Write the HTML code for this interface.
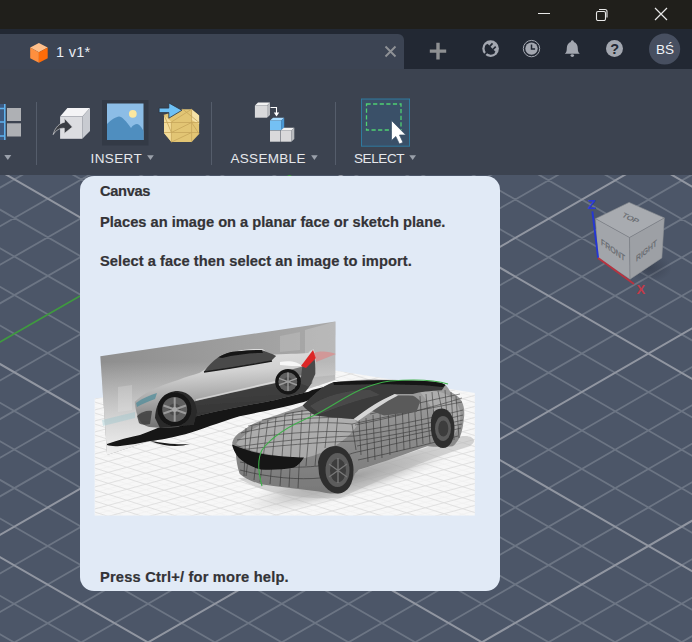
<!DOCTYPE html>
<html><head><meta charset="utf-8">
<style>
*{margin:0;padding:0;box-sizing:border-box}
html,body{width:692px;height:642px;overflow:hidden;background:#4c5668;font-family:"Liberation Sans",sans-serif}
.abs{position:absolute}
#title{position:absolute;left:0;top:0;width:692px;height:29px;background:#201f1b}
#tabs{position:absolute;left:0;top:29px;width:692px;height:39.5px;background:#222833}
#tab{position:absolute;left:-10px;top:33.8px;width:414px;height:37px;background:#3c4453;border-radius:0 6px 0 0}
#toolbar{position:absolute;left:0;top:68.5px;width:692px;height:106.5px;background:#3c4350}
#viewport{position:absolute;left:0;top:175px;width:692px;height:467px;background:#4c5668;overflow:hidden}
.grid{position:absolute;left:0;top:0}
#tip{position:absolute;left:80px;top:176px;width:420px;height:415px;background:#e1eaf6;border-radius:14px;overflow:hidden}
.tt{position:absolute;left:20px;font-weight:bold;font-size:14.67px;color:#333336;-webkit-text-stroke:0.2px #333336;white-space:nowrap;line-height:1}
.lbl{position:absolute;top:151.8px;font-size:13.5px;color:#e6e8ec;white-space:nowrap;line-height:1}
.sep{position:absolute;top:102px;width:1px;height:63px;background:#545c6a}
.dd{position:absolute;top:155px;width:0;height:0;border-left:3.5px solid transparent;border-right:3.5px solid transparent;border-top:5px solid #9aa0aa}
</style></head><body>
<div id="title">
 <div class="abs" style="left:538px;top:13px;width:12px;height:1px;background:#e8e8e8"></div>
 <svg class="abs" style="left:594px;top:7px" width="16" height="14" viewBox="0 0 16 14"><rect x="2.5" y="4.5" width="9" height="9" rx="1.5" fill="none" stroke="#e8e8e8" stroke-width="1.1"/><path d="M5 2.5h6a2 2 0 0 1 2 2v6" fill="none" stroke="#e8e8e8" stroke-width="1.1"/></svg>
 <svg class="abs" style="left:654px;top:7px" width="14" height="14" viewBox="0 0 14 14"><path d="M1 1L13 13M13 1L1 13" stroke="#e8e8e8" stroke-width="1.2"/></svg>
</div>
<div id="tabs"></div>
<div id="tab"></div>
<svg class="abs" style="left:0;top:29px" width="692" height="39" viewBox="0 29 692 39">
 <polygon points="38.9,43.1 47.7,47.6 38.9,52.2 30.2,47.6" fill="#ffc08c"/>
 <polygon points="30.2,47.6 38.9,52.2 38.9,62.8 30.2,58.2" fill="#ff8f3e"/>
 <polygon points="38.9,52.2 47.7,47.6 47.7,58.2 38.9,62.8" fill="#ff6c08"/>
 <path d="M385.5 46.5L395.5 56.5M395.5 46.5L385.5 56.5" stroke="#8f9296" stroke-width="1.9"/>
 <path d="M438 42.8v16.6M429.8 51.1h16.4" stroke="#8e9092" stroke-width="3.4"/>
 <g fill="#a3a7b0">
  <circle cx="490.6" cy="48.6" r="8.3"/>
  <circle cx="531.5" cy="48.6" r="8.2" fill="none" stroke="#a3a7b0" stroke-width="1"/>
  <circle cx="531.5" cy="48.6" r="6.2"/>
  <path d="M564.8 53.8c1.6-1.3 2-3 2-5.5c0-3.3 1.6-5.6 4-6.3c0-1 .5-1.8 1.5-1.8s1.5.8 1.5 1.8c2.4.7 4 3 4 6.3c0 2.5.4 4.2 2 5.5z"/>
  <ellipse cx="572.3" cy="55.6" rx="1.8" ry="1.3"/>
  <circle cx="614.5" cy="48.4" r="8.5"/>
 </g>
 <path d="M495.05 53.05A6.3 6.3 0 0 1 486.15 44.15Z" fill="#222833"/>
 <polygon points="485.93,45.35 487.56,43.72 495.48,51.64 493.85,53.27" fill="#222833"/><polygon points="489.12,45.70 491.94,42.87 493.15,44.07 490.32,46.90" fill="#222833"/><polygon points="492.30,48.88 495.13,46.05 496.33,47.26 493.50,50.08" fill="#222833"/>
 <polygon points="487.14,50.79 483.25,54.68 484.52,55.95 488.41,52.06" fill="#222833"/>
 <path d="M531.5 44.5v4.6h3.6" stroke="#222833" stroke-width="1.5" fill="none"/>
 <text x="614.6" y="54" text-anchor="middle" font-family="Liberation Sans" font-weight="bold" font-size="14.5" fill="#222833">?</text>
 <circle cx="664.6" cy="49" r="15.6" fill="#474f60"/>
 <text x="664.9" y="54.2" text-anchor="middle" font-family="Liberation Sans" font-size="13.5" fill="#f2f4f8">BŚ</text>
</svg>
<div class="abs" style="left:56px;top:44px;font-size:14.5px;color:#e9edf3;line-height:16px;white-space:nowrap;letter-spacing:0.3px">1 v1*</div>
<div id="toolbar"></div>
<svg class="abs" style="left:0;top:68px" width="692" height="107" viewBox="0 68 692 107">
 <!-- left partial icon -->
 <rect x="0" y="104" width="4.5" height="36" fill="#3e5a80"/>
 <path d="M4.8 104v36M0 108.5h5M0 122h5M0 136h5" stroke="#5fb2ee" stroke-width="1.6"/>
 <rect x="7" y="108" width="14" height="13" fill="#aeb0b4"/>
 <rect x="7" y="123.3" width="14" height="13.2" fill="#aeb0b4"/>
 <polygon points="4.3,155 11.3,155 7.8,160" fill="#9aa0aa"/>
 <rect x="36" y="102" width="1" height="63" fill="#555d6b"/>
 <!-- insert cube -->
 <polygon points="60.1,116.6 67.4,107.9 90,107.9 82.3,116.6" fill="#f4f4f6"/>
 <polygon points="60.1,116.6 82.3,116.6 82.3,138.8 60.1,138.8" fill="#dcdde1"/>
 <polygon points="82.3,116.6 90,107.9 90,131.1 82.3,138.8" fill="#c8cbd1"/>
 <path d="M53.2 134.6C55 127 60 123 64.5 122.3L64.3 118.3L72.4 127L64.3 133.4L64.3 128.3C60 127.8 56 130 53.2 134.6Z" fill="#3a3d43" stroke="#e8e8ea" stroke-width="0.6"/>
 <!-- image icon -->
 <rect x="102" y="100" width="46.5" height="45.5" fill="#333a46"/>
 <rect x="107" y="103.5" width="36.5" height="36.5" fill="#8cbde6"/>
 <path d="M107 140V124C112 119 116 117 119 116.5C122 116.5 126 121 131 128C133 125 135 124 137 124C139.5 124 142 128 143.5 131V140Z" fill="#4f8ebf"/>
 <circle cx="132.8" cy="113.8" r="3.9" fill="#fbe7a0"/>
 <!-- mesh icon -->
 <polygon points="164,114.8 164,133.1 171.4,142.1 191.6,142.1 199.1,133.9 199.1,115.6 191.6,109.2 182.7,109.2" fill="#e2c574"/>
 <polygon points="164,114.8 171.4,122 171.4,142.1 164,133.1" fill="#f3dc9a"/>
 <polygon points="191.6,109.2 199.1,115.6 199.1,124 191.6,120" fill="#f5e2a8"/>
 <path d="M171.4 122V142.1M191.6 109.2V142.1M164 122.5L199 122.5M164 132.5L199 132.5M171.4 122L191.6 109.2M164 114.8L171.4 132.5M171.4 132.5L191.6 122.5M171.4 142.1L191.6 132.5M191.6 122.5L199.1 133.9M182.7 109.2L199.1 122.5" stroke="#c7a65a" stroke-width="0.8" fill="none"/>
 <path d="M159.1 108.1H168.8V102.9L181.9 110.3L168.8 118.2V112.6H159.1Z" fill="#6ec1f6" stroke="#2c3340" stroke-width="0.8"/>
 <rect x="211" y="102" width="1" height="63" fill="#555d6b"/>
 <!-- assemble icon -->
 <polygon points="254.9,105.5 258,102.5 270,102.5 267,105.5" fill="#f2f2f2"/>
 <rect x="254.9" y="105.5" width="12.1" height="12.2" fill="#d9d9db"/>
 <polygon points="267,105.5 270,102.5 270,115 267,117.7" fill="#b9bbbf"/>
 <path d="M270.5 107.5H276.5V114" stroke="#ffffff" stroke-width="1.1" fill="none"/>
 <polygon points="273.8,112.5 279.2,112.5 276.5,116.5" fill="#ffffff"/>
 <polygon points="270,120.5 273,117.7 284.2,117.7 281.2,120.5" fill="#a9dcff"/>
 <rect x="270" y="120.5" width="11.2" height="9.7" fill="#74c0f4"/>
 <polygon points="281.2,120.5 284.2,117.7 284.2,127.5 281.2,130.2" fill="#4a98d4"/>
 <rect x="270" y="130.5" width="10.4" height="11.2" fill="#d9d9db"/>
 <polygon points="280.8,130.5 283.8,127.8 294.3,127.8 291.3,130.5" fill="#f2f2f2"/>
 <rect x="280.8" y="130.5" width="10.5" height="11.2" fill="#d9d9db"/>
 <polygon points="291.3,130.5 294.3,127.8 294.3,139 291.3,141.7" fill="#b9bbbf"/>
 <rect x="335" y="102" width="1" height="63" fill="#555d6b"/>
 <!-- select -->
 <rect x="361.5" y="99" width="48" height="47.2" fill="#3a5068" stroke="#2f7a9e" stroke-width="1"/>
 <rect x="366.5" y="104" width="34.5" height="26" fill="none" stroke="#4fd072" stroke-width="1.3" stroke-dasharray="4.2 2.4"/>
 <path d="M391.5 120.5V140.5L395.8 136.5L399.4 144L403 142.4L399.5 135H405.8Z" fill="#ffffff" stroke="#3a5068" stroke-width="0.7"/>
</svg>
<div class="lbl" style="left:90.5px;letter-spacing:0.4px">INSERT</div>
<div class="lbl" style="left:230.5px;letter-spacing:0.3px">ASSEMBLE</div>
<div class="lbl" style="left:354px;letter-spacing:-0.4px">SELECT</div>
<svg class="abs" style="left:0;top:150px" width="692" height="14" viewBox="0 150 692 14">
 <polygon points="147.1,155.2 153.8,155.2 150.45,160" fill="#9aa0aa"/>
 <polygon points="311.1,155.2 317.7,155.2 314.4,160" fill="#9aa0aa"/>
 <polygon points="409.3,155.2 416,155.2 412.65,160" fill="#9aa0aa"/>
</svg>
<div id="viewport"><svg class="grid" width="692" height="467" viewBox="0 175 692 467">
<path d="M580.2 160.2L711.6 236.4M513.6 160.1L711.6 274.8M448.6 160.9L711.6 313.3M381.9 160.8L711.6 351.7M248.4 160.5L711.6 428.6M47.9 160.2L-19.1 198.6M181.6 160.4L711.6 467.1M114.8 160.3L-19.1 237.2M114.8 160.3L711.6 505.6M181.6 160.4L-19.1 275.8M47.9 160.2L711.6 544.0M248.4 160.5L-19.1 314.4M-19.1 198.6L711.6 621.0M381.9 160.8L-19.2 391.6M-19.1 237.2L711.6 659.4M448.6 160.9L-19.2 430.2M-19.1 275.8L645.1 659.5M516.9 160.1L-19.2 468.8M-19.1 314.4L578.5 659.5M583.5 160.2L-19.2 507.4M-19.2 391.6L445.2 659.6M711.6 163.3L-19.2 584.6M-19.2 430.2L378.5 659.6M711.6 201.8L-19.3 623.2M-19.2 468.8L311.8 659.7M711.6 240.2L-15.9 659.9M-19.2 507.4L245.0 659.7M711.6 278.7L51.0 659.8M-19.2 584.6L111.3 659.8M711.6 355.6L184.8 659.8M-19.3 623.2L44.3 659.8M711.6 394.0L251.7 659.7M711.6 432.5L318.4 659.7M711.6 471.0L385.2 659.6M711.6 547.9L518.5 659.6M711.6 586.4L585.1 659.5M711.6 624.8L651.7 659.5" stroke="#6c7584" stroke-width="1.8" fill="none"/>
<path d="M646.7 160.3L711.6 197.9M315.2 160.7L711.6 390.2M-19.1 160.0L711.6 582.5M-19.1 353.0L511.9 659.6M650.1 160.3L-19.2 546.0M-19.2 546.0L178.1 659.8M711.6 317.1L117.9 659.8M711.6 509.4L451.9 659.6" stroke="#9196a1" stroke-width="2.0" fill="none"/>
<path d="M315.2 160.7L-19.1 353.0" stroke="#3f9a3f" stroke-width="1.6" fill="none"/>
</svg></div>
<svg class="abs" style="left:575px;top:190px" width="100" height="115" viewBox="575 190 100 115">
<defs>
 <radialGradient id="cs" cx="0.5" cy="0.5" r="0.5"><stop offset="0" stop-color="#2e3442" stop-opacity="0.5"/><stop offset="1" stop-color="#2e3442" stop-opacity="0"/></radialGradient>
</defs>
<ellipse cx="650" cy="268" rx="22" ry="14" fill="url(#cs)"/>
<polygon points="629.1,202.4 664.3,217.9 629.5,237.5 595.6,218.7" fill="#a8abb0"/>
<polygon points="595.6,218.7 629.5,237.5 630,279.2 598.1,257.9" fill="#a2a5aa"/>
<polygon points="629.5,237.5 664.3,217.9 661.8,257.9 630,279.2" fill="#9da0a5"/>
<path d="M595.6 218.7L629.5 237.5L664.3 217.9M629.5 237.5L630 279.2" stroke="#7d8085" stroke-width="0.7" fill="none"/>
<path d="M629.1 202.4L664.3 217.9L661.8 257.9L630 279.2L598.1 257.9L595.6 218.7Z" stroke="#8f9296" stroke-width="0.6" fill="none"/>
<g font-family="Liberation Sans" font-size="9" fill="#66696e" stroke="#66696e" stroke-width="0.25">
 <text transform="matrix(0.85 0.42 -0.5 0.6 629 220)" text-anchor="middle">TOP</text>
 <text transform="matrix(0.78 0.55 0 0.95 613 253)" text-anchor="middle">FRONT</text>
 <text transform="matrix(0.75 -0.6 0 0.95 646.5 253.5)" text-anchor="middle">RIGHT</text>
</g>
<path d="M598.1 257.9L592.4 211.3" stroke="#2436d6" stroke-width="1.9"/>
<path d="M598.1 257.9L634 284.1" stroke="#b8323f" stroke-width="1.9"/>
<text x="587.8" y="209" font-family="Liberation Sans" font-weight="bold" font-size="13.5" fill="#2a3ad8">Z</text>
<text x="636.4" y="294" font-family="Liberation Sans" font-weight="bold" font-size="13" fill="#c23a48">X</text>
</svg>

<div id="tip">
 <div class="tt" style="top:8.3px;letter-spacing:-0.35px">Canvas</div>
 <div class="tt" style="top:38.5px">Places an image on a planar face or sketch plane.</div>
 <div class="tt" style="top:78.3px;letter-spacing:0.07px">Select a face then select an image to import.</div>
  <div class="tt" style="top:393.5px;letter-spacing:0.19px">Press Ctrl+/ for more help.</div>
</div>
<svg class="abs" style="left:90px;top:315px" width="390" height="205" viewBox="90 315 390 205">
<defs>
 <linearGradient id="pg" x1="0" y1="0" x2="1" y2="0">
  <stop offset="0" stop-color="#8e8e8e"/><stop offset="0.5" stop-color="#9c9c9c"/><stop offset="1" stop-color="#aaaaaa"/>
 </linearGradient>
 <linearGradient id="pfade" x1="0" y1="0" x2="0" y2="1">
  <stop offset="0" stop-color="#ffffff" stop-opacity="0"/><stop offset="0.3" stop-color="#ffffff" stop-opacity="0"/><stop offset="0.75" stop-color="#e8e8e8" stop-opacity="0.8"/><stop offset="1" stop-color="#f2f2f2" stop-opacity="1"/>
 </linearGradient>
 <linearGradient id="body1" x1="0" y1="0" x2="0.15" y2="1">
  <stop offset="0" stop-color="#e2e2e2"/><stop offset="0.35" stop-color="#d2d2d2"/><stop offset="0.65" stop-color="#a8a8a8"/><stop offset="1" stop-color="#707070"/>
 </linearGradient>
 <linearGradient id="body2" x1="0" y1="0" x2="0" y2="1">
  <stop offset="0" stop-color="#a0a0a0"/><stop offset="0.5" stop-color="#8c8c8c"/><stop offset="1" stop-color="#787878"/>
 </linearGradient>
 <radialGradient id="shad" cx="0.5" cy="0.5" r="0.5">
  <stop offset="0" stop-color="#8a8a8a" stop-opacity="0.75"/><stop offset="0.6" stop-color="#b0b0b0" stop-opacity="0.5"/><stop offset="1" stop-color="#d8d8d8" stop-opacity="0"/>
 </radialGradient>
 <pattern id="fgrid" width="18.6" height="18.6" patternUnits="userSpaceOnUse" patternTransform="matrix(1 -0.27 1 0.32 0 0)">
  <path d="M0 9.3H18.6M9.3 0V18.6" stroke="#ececec" stroke-width="0.5" fill="none"/>
  <path d="M0 0H18.6M0 0V18.6" stroke="#cdcdcd" stroke-width="0.9" fill="none"/>
 </pattern>
<filter id="soft" x="-5%" y="-5%" width="110%" height="110%"><feGaussianBlur stdDeviation="0.45"/></filter>
</defs>
<g filter="url(#soft)">
<!-- floor -->
<polygon points="94.7,398.5 335,370.5 474.8,393.1 474.8,515.5 94.7,515.5" fill="#f7f7f7"/>
<clipPath id="fclip"><polygon points="94.7,398.5 335,370.5 474.8,393.1 474.8,515.5 94.7,515.5"/></clipPath>
<g clip-path="url(#fclip)"><path d="M94.7 360.5L474.8 257.9M94.7 371.5L474.8 268.9M94.7 382.5L474.8 279.9M94.7 393.5L474.8 290.9M94.7 404.5L474.8 301.9M94.7 415.5L474.8 312.9M94.7 426.5L474.8 323.9M94.7 437.5L474.8 334.9M94.7 448.5L474.8 345.9M94.7 459.5L474.8 356.9M94.7 470.5L474.8 367.9M94.7 481.5L474.8 378.9M94.7 492.5L474.8 389.9M94.7 503.5L474.8 400.9M94.7 514.5L474.8 411.9M94.7 525.5L474.8 422.9M94.7 536.5L474.8 433.9M94.7 547.5L474.8 444.9M94.7 558.5L474.8 455.9M94.7 569.5L474.8 466.9M94.7 580.5L474.8 477.9M94.7 591.5L474.8 488.9M94.7 602.5L474.8 499.9M94.7 613.5L474.8 510.9M94.7 242.5L474.8 364.1M94.7 253.5L474.8 375.1M94.7 264.5L474.8 386.1M94.7 275.5L474.8 397.1M94.7 286.5L474.8 408.1M94.7 297.5L474.8 419.1M94.7 308.5L474.8 430.1M94.7 319.5L474.8 441.1M94.7 330.5L474.8 452.1M94.7 341.5L474.8 463.1M94.7 352.5L474.8 474.1M94.7 363.5L474.8 485.1M94.7 374.5L474.8 496.1M94.7 385.5L474.8 507.1M94.7 396.5L474.8 518.1M94.7 407.5L474.8 529.1M94.7 418.5L474.8 540.1M94.7 429.5L474.8 551.1M94.7 440.5L474.8 562.1M94.7 451.5L474.8 573.1M94.7 462.5L474.8 584.1M94.7 473.5L474.8 595.1M94.7 484.5L474.8 606.1M94.7 495.5L474.8 617.1M94.7 506.5L474.8 628.1M94.7 517.5L474.8 639.1" stroke="#efefef" stroke-width="0.6" fill="none"/><path d="M94.7 366.0L474.8 263.4M94.7 377.0L474.8 274.4M94.7 388.0L474.8 285.4M94.7 399.0L474.8 296.4M94.7 410.0L474.8 307.4M94.7 421.0L474.8 318.4M94.7 432.0L474.8 329.4M94.7 443.0L474.8 340.4M94.7 454.0L474.8 351.4M94.7 465.0L474.8 362.4M94.7 476.0L474.8 373.4M94.7 487.0L474.8 384.4M94.7 498.0L474.8 395.4M94.7 509.0L474.8 406.4M94.7 520.0L474.8 417.4M94.7 531.0L474.8 428.4M94.7 542.0L474.8 439.4M94.7 553.0L474.8 450.4M94.7 564.0L474.8 461.4M94.7 575.0L474.8 472.4M94.7 586.0L474.8 483.4M94.7 597.0L474.8 494.4M94.7 608.0L474.8 505.4M94.7 619.0L474.8 516.4M94.7 248.0L474.8 369.6M94.7 259.0L474.8 380.6M94.7 270.0L474.8 391.6M94.7 281.0L474.8 402.6M94.7 292.0L474.8 413.6M94.7 303.0L474.8 424.6M94.7 314.0L474.8 435.6M94.7 325.0L474.8 446.6M94.7 336.0L474.8 457.6M94.7 347.0L474.8 468.6M94.7 358.0L474.8 479.6M94.7 369.0L474.8 490.6M94.7 380.0L474.8 501.6M94.7 391.0L474.8 512.6M94.7 402.0L474.8 523.6M94.7 413.0L474.8 534.6M94.7 424.0L474.8 545.6M94.7 435.0L474.8 556.6M94.7 446.0L474.8 567.6M94.7 457.0L474.8 578.6M94.7 468.0L474.8 589.6M94.7 479.0L474.8 600.6M94.7 490.0L474.8 611.6M94.7 501.0L474.8 622.6M94.7 512.0L474.8 633.6" stroke="#dedede" stroke-width="0.9" fill="none"/></g>
<!-- panel -->
<polygon points="100.3,356.3 335.4,321.6 335.2,380 107.1,455" fill="url(#pg)"/>
<polygon points="305,330 335.4,321.6 335.2,375 305,378" fill="#c4c4c4" opacity="0.55"/>
<polygon points="280,336 300,332 300,350 280,352" fill="#bdbdbd" opacity="0.5"/>
<polygon points="118,387 132,385 132,410 118,412" fill="#b4b4b4" opacity="0.6"/>
<polygon points="100.3,356.3 335.4,321.6 335.2,380 107.1,455" fill="url(#pfade)"/>
<!-- sketch car under shadow -->
<path d="M107 444C118 440 130 437 140 435C160 428 175 420 190 414C215 408 240 402 258 399C280 396 295 394 308 392L312 390L320 388C326 386 331 385 335 384L335 391C325 394 315 398 304.5 401.7C285 407 260 412 239.5 416.2C220 422 200 430 185.3 434.2C170 438 160 440 150 441C140 443 130 445 120 446C114 446.5 110 446 107 445Z" fill="#121212"/>
<path d="M150 441C165 443 175 445 190 444C180 447 165 447 150 441Z" fill="#1a1a1a"/>
<!-- sketch car body -->
<path d="M134.7 401.7C142 395 150 390 158.2 387.3C165 384 172 382 178.1 380C186 377 193 375 199.8 372.8C206 369 210 365 214.2 362C218 359 221 357 225 354.7C235 351 243 350 250.3 349.3C255 349 260 349 263 349.3C265 351 267 353 268.4 354.7C285 354 300 353.5 308.2 352.9C310 351 312 350 313.6 349.3C315 353 316 358 315.4 362C314.5 370 313 378 311.8 383.6C309 387 307 390 304.5 392.7C295 395 285 397 275.6 399.9C250 405 220 410 196.2 416.2C190 420 184 424 178.1 427C168 428 158 428 149.2 427C146 426 144 425 142 423.4C139 420 137.5 416 136.5 412.5C135.5 408 135 405 134.7 401.7Z" fill="url(#body1)"/>
<!-- side dark lower -->
<path d="M192 402C225 394 270 384 310 376L311 384C309 387 307 390 304.5 392.7C295 395 285 397 275.6 399.9C250 405 220 410 196.2 416.2C192 418 190 419 188 420Z" fill="#222222" opacity="0.8"/>
<path d="M285 372C295 368 305 366 314 364L312 384C305 380 295 378 285 380Z" fill="#3a3a3a" opacity="0.6"/>
<path d="M196 400C230 392 270 383 306 375" stroke="#ffffff" stroke-width="1.5" fill="none" opacity="0.45"/>
<!-- windows -->
<path d="M203.8 371.8C208 366 213 361 218.3 357.3C224 354 230 352 235.6 351.6C245 350.5 253 350 261.6 350.1C267 352 272 354 276.1 355.9C274 358 272 360 270.3 361.7C258 363 246 365 235.6 367.5C224 369 213 371 203.8 371.8Z" fill="#4a4a4a"/>
<path d="M218.3 357.3C224 354 230 352 235.6 351.6C245 350.5 253 350 261.6 350.1L263 353C250 353 235 355 222 358Z" fill="#161616"/>
<path d="M204 372C225 369 250 365 272 361" stroke="#1e1e1e" stroke-width="1.4" fill="none"/>
<path d="M302.5 364.7L314.1 353.1C315 360 315.5 367 315.3 373.9C313 379 311 383 308.3 386.6L300.2 383.2Z" fill="#4a4a4a"/>
<path d="M280 362C290 360 298 362 302 366C296 366 288 366 280 365Z" fill="#ffffff" opacity="0.8"/>
<path d="M301 366L313 350L316 358L306 368Z" fill="#dc2828"/>
<path d="M314 353C322 350 330 352 336 354L316 362Z" fill="#f07070" opacity="0.45"/>
<path d="M136 403C143 398 150 395 157 393L155 399C149 401 142 404 137 407Z" fill="#4a8a98" opacity="0.7"/>
<path d="M137 416C141 412 147 410 152 411L150 424C145 425 141 425 139 423Z" fill="#3a3a3a" opacity="0.8"/>
<path d="M102 420L135 412L135 418L103 426Z" fill="#8ec4cc" opacity="0.35"/>
<!-- sketch wheels -->
<path d="M155 418C156 400 165 391 178 391C190 392 196 400 197 412L194 425L160 428Z" fill="#2a2a2a"/>
<circle cx="174.5" cy="409.3" r="16.8" fill="#141414"/>
<circle cx="174.7" cy="409.4" r="12.5" fill="#5e5e5e"/>
<circle cx="174.7" cy="409.4" r="6" fill="#484848"/>
<path d="M174.7 397.5V421.5M163.5 405.5L186 413.5M163.5 413.5L186 405.5" stroke="#9a9a9a" stroke-width="2"/>
<circle cx="174.7" cy="409.4" r="2.5" fill="#a8a8a8"/>
<circle cx="288" cy="381.7" r="12.8" fill="#121212"/>
<circle cx="287.8" cy="381.8" r="9.5" fill="#5e5e5e"/>
<circle cx="287.8" cy="381.8" r="4.5" fill="#484848"/>
<path d="M288 372.5V391M279 378.4L297 385M279 385L297 378.4" stroke="#9c9c9c" stroke-width="1.4"/>
<!-- 3D car shadow -->
<path d="M238 478C260 492 300 500 340 498C380 480 420 462 470 446C480 440 470 432 455 438C420 450 380 462 350 474Z" fill="#b4b4b4" opacity="0.55"/>
<ellipse cx="350" cy="478" rx="115" ry="20" fill="url(#shad)" transform="rotate(-16 350 478)"/>
<!-- 3D car body -->
<path d="M232.2 442.7C234 437 237 434 241.3 431.8C250 425 256 422 264.7 419.2C280 414 292 410 302.7 405.5C315 395 322 386 333.4 382.3C350 380 365 379.5 376.7 379.5C400 380 415 380 427.3 381.3C437 382 442 383 445.4 384.9C448 387 449 390 450.8 392.1C456 395 459 397 461.6 401.1C464 406 464.5 410 464.2 415.6C463.5 425 462 432 459.8 437.3C457 442 455 445 452.6 446.3C445 447 435 447 427.3 446.3C410 452 385 462 358.7 469.8C357 472 356 473 355 473.4C352 482 347 490 340.6 493.2C332 494 325 493 318.9 491.4C300 489 280 487 261.1 484.2C250 481 243 477 239.5 473.4C237 466 236 458 235.8 451.7C234 448 232.5 446 232.2 442.7Z" fill="url(#body2)"/>
<!-- hood highlight -->
<path d="M236 444C245 432 262 422 290 414C310 409 330 410 345 414C352 417 356 420 358 424C350 438 330 452 305 458C275 457 250 452 236 444Z" fill="#c6c6c6" opacity="0.55"/>
<path d="M420 392C440 388 455 395 460 410C462 420 458 432 450 440C445 430 435 410 420 392Z" fill="#c0c0c0" opacity="0.5"/>
<!-- mesh lines -->
<g stroke="#1a1a1a" stroke-width="0.65" fill="none" opacity="0.7">
 <path d="M241 433C270 426 310 420 352 424C380 418 420 410 462 402"/>
 <path d="M237 440C275 434 315 430 354 432C385 427 425 420 463 410"/>
 <path d="M238 450C275 446 320 442 356 441C390 436 430 428 463 420"/>
 <path d="M236 447C270 442 315 437 355 436C390 431 428 424 463 415"/>
 <path d="M248 426C280 420 320 416 350 418M262 420C290 414 320 412 345 414M285 414C305 410 325 408 340 410"/>
 <path d="M240 462C270 468 300 468 318 466C335 460 345 455 357 452C395 444 430 436 461 428"/>
 <path d="M240 470C270 478 300 480 320 478M358 460C395 452 430 444 458 436M357 446C395 438 430 431 462 424"/>
 <path d="M355 425C390 418 430 408 462 398M370 414C400 408 430 400 460 394"/>
 <path d="M246 428L244 476M252 426L246 476M260 422L254 480M268 420L260 482M276 417L270 484M285 414L280 486M293 412L289 487M302 410L298 488M311 410L306 466M320 410L315 466M329 412L325 448M338 414L335 446M352 424L356 450M359 420L361 455M366 418L368 462M373 415L375 460M380 412L382 458M388 408L390 455M395 405L397 452M402 402L404 450M408 400L410 448M414 398L417 446M420 396L423 444M426 394L430 443M432 392L436 442M438 391L442 410M445 390L449 444M451 392L454 440M456 396L459 438"/>
</g>
<!-- greenhouse glass -->
<path d="M302.7 405.5C312 396 322 386 333.4 382.3C360 380 400 380 427.3 381.3C437 382 442 383 445.4 384.9L441.8 390.3C430 391 420 392 412.9 393.9C405 394 399 394 394.8 393.9C380 402 365 412 355.1 419.2C340 418 325 417 315.3 415.6C310 412 305 409 302.7 405.5Z" fill="#3a3a3a"/>
<path d="M333.4 382.3C360 380 400 379.5 427.3 381.3C437 382 442 383 445.4 384.9L443 387C420 384 380 383.5 334 385Z" fill="#141414"/>
<path d="M310 406C325 396 345 390 370 390L380 395C355 400 335 408 320 414Z" fill="#555555" opacity="0.6"/>
<path d="M369.5 410.2C378 404 386 399 394.8 395.7C400 395.5 407 395.5 412.9 395.7C416 397 418 399 420.1 401.1C419 405 418 408 416.5 412C405 413 395 414 384 415.6Z" fill="#5a5a5a"/>
<path d="M353.3 419.2C368 408 380 400 394.8 393.9L398 395.5C385 402 372 411 358 421Z" fill="#d6d6d6"/>
<!-- front grille -->
<path d="M232 444.5C245 450 256 453 268.4 455C282 456.5 295 457.5 304 457.5C301 462 298 465.5 294 467.5C284 469.5 272 470 261 469.5C251 467 243 462 238.5 457.5C235 453 233 449 232 444.5Z" fill="#121212"/>
<!-- wheels -->
<path d="M318 462C320 451 327 446 336 446C347 447 353.5 458 353.5 470C353.5 484 348 493 338 493.5C328 493 321 484 319 474Z" fill="#2e2e2e"/>
<ellipse cx="337.5" cy="470" rx="12" ry="17" fill="#5c5c5c"/>
<ellipse cx="338" cy="470.5" rx="8" ry="11.5" fill="#3c3c3c"/>
<path d="M338 458V483M329 464L347 477M329 477L347 464" stroke="#777" stroke-width="1.4"/>
<path d="M431 420C432 412 436 408.5 442 408.5C450 409 454.5 418 454.5 428C454.5 440 450 448 443 448C436 448 432 440 431 430Z" fill="#2e2e2e"/>
<ellipse cx="443" cy="428.5" rx="8" ry="12.5" fill="#5c5c5c"/>
<ellipse cx="443.3" cy="428.5" rx="5" ry="8" fill="#3c3c3c"/>
<!-- green curve -->
<path d="M262 486C258 472 257 460 262 450C272 436 290 425 315 415C340 402 360 385 390 381C415 379 435 380 448 384" stroke="#3fb04a" stroke-width="1.1" fill="none"/>
</g>
</svg>

</body></html>
